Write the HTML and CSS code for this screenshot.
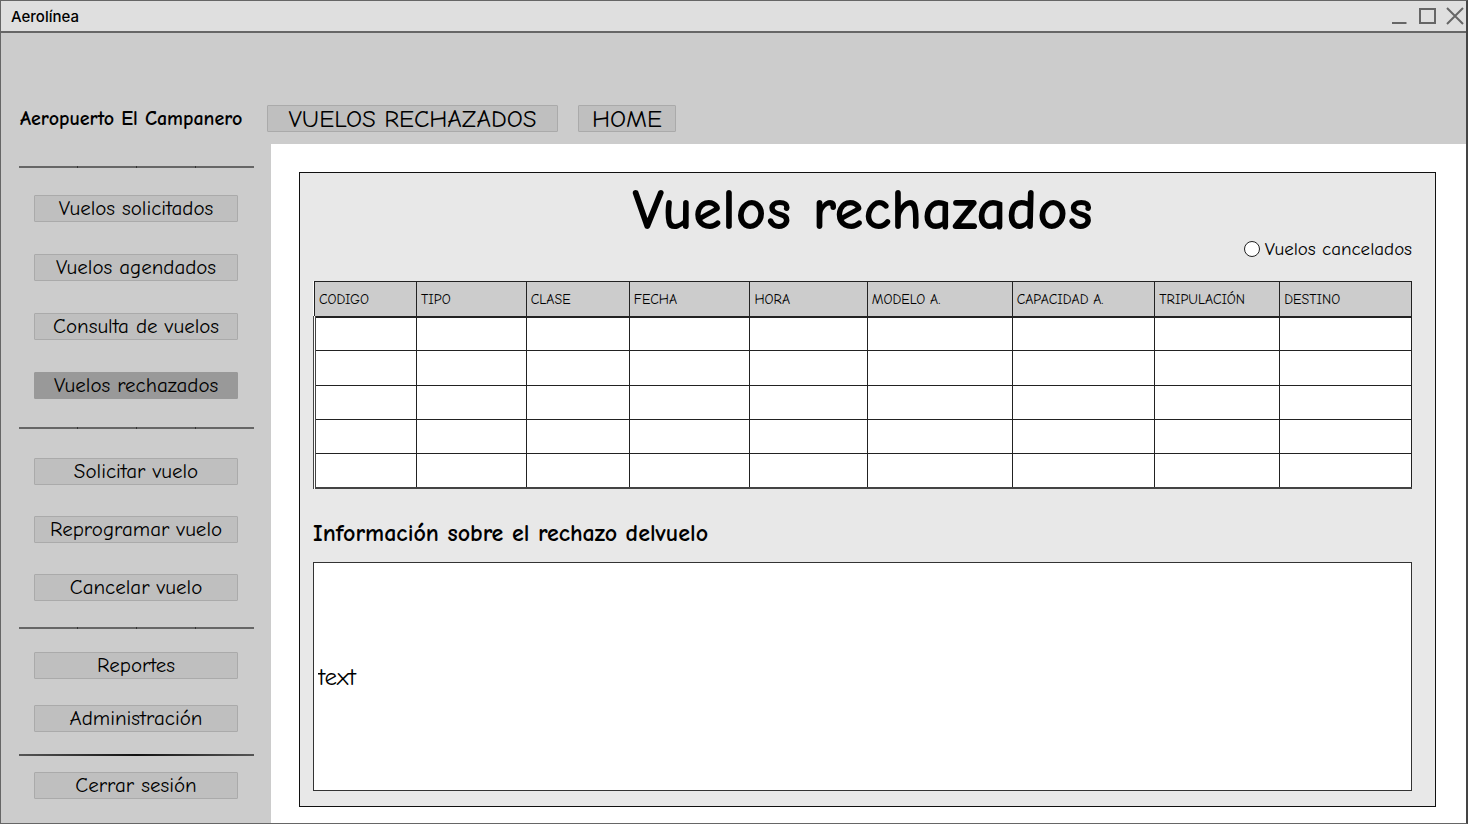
FILE: index.html
```html
<!DOCTYPE html>
<html lang="es">
<head>
<meta charset="utf-8">
<meta name="viewport" content="width=device-width, initial-scale=1">
<title>Aerolínea</title>
<link rel="stylesheet" href="styles.css">
</head>
<body>
<div class="window">
  <div class="titlebar">
    <span class="titlebar-name">Aerolínea</span>
    <div class="window-controls">
      <button type="button" class="control" aria-label="Minimizar"><svg width="18" height="18" viewBox="0 0 18 18"><path d="M2 16H16.5"/></svg></button>
      <button type="button" class="control" aria-label="Maximizar"><svg width="18" height="18" viewBox="0 0 18 18"><path d="M2 2H17V16H2Z"/></svg></button>
      <button type="button" class="control" aria-label="Cerrar"><svg width="18" height="18" viewBox="0 0 18 18"><path d="M1 1L17 17M17 1L1 17"/></svg></button>
    </div>
  </div>
  <header class="header">
    <strong class="brand">Aeropuerto El Campanero</strong>
    <button type="button" class="btn btn-header btn-current">VUELOS RECHAZADOS</button>
    <button type="button" class="btn btn-header">HOME</button>
  </header>
  <div class="body">
    <nav class="sidebar">
      <hr class="rule">
      <div class="group group-wide">
        <button type="button" class="btn">Vuelos solicitados</button>
        <button type="button" class="btn">Vuelos agendados</button>
        <button type="button" class="btn">Consulta de vuelos</button>
        <button type="button" class="btn btn-active">Vuelos rechazados</button>
      </div>
      <hr class="rule">
      <div class="group">
        <button type="button" class="btn">Solicitar vuelo</button>
        <button type="button" class="btn">Reprogramar vuelo</button>
        <button type="button" class="btn">Cancelar vuelo</button>
      </div>
      <hr class="rule">
      <div class="group group-tight">
        <button type="button" class="btn">Reportes</button>
        <button type="button" class="btn">Administración</button>
      </div>
      <hr class="rule rule-plain">
      <div class="group group-last">
        <button type="button" class="btn">Cerrar sesión</button>
      </div>
    </nav>
    <main class="content">
      <section class="panel">
        <h1 class="title">Vuelos rechazados</h1>
        <label class="option"><input type="radio" class="radio" name="filtro">Vuelos cancelados</label>
        <table class="flights">
          <colgroup><col class="c1"><col class="c2"><col class="c3"><col class="c4"><col class="c5"><col class="c6"><col class="c7"><col class="c8"><col class="c9"></colgroup>
          <thead>
            <tr><th>CODIGO</th><th>TIPO</th><th>CLASE</th><th>FECHA</th><th>HORA</th><th>MODELO A.</th><th>CAPACIDAD A.</th><th>TRIPULACIÓN</th><th>DESTINO</th></tr>
          </thead>
          <tbody>
            <tr><td></td><td></td><td></td><td></td><td></td><td></td><td></td><td></td><td></td></tr>
            <tr><td></td><td></td><td></td><td></td><td></td><td></td><td></td><td></td><td></td></tr>
            <tr><td></td><td></td><td></td><td></td><td></td><td></td><td></td><td></td><td></td></tr>
            <tr><td></td><td></td><td></td><td></td><td></td><td></td><td></td><td></td><td></td></tr>
            <tr><td></td><td></td><td></td><td></td><td></td><td></td><td></td><td></td><td></td></tr>
          </tbody>
        </table>
        <label class="info-label" for="info">Información sobre el rechazo delvuelo</label>
        <input type="text" class="info" id="info" value="text">
      </section>
    </main>
  </div>
</div>
</body>
</html>
```
FILE: styles.css
```css
* {
  box-sizing: border-box;
}

body {
  margin: 0;
  color: #000;
  font-family: "Comic Sans MS", "Comic Neue", "Noto Sans", sans-serif;
  font-size: 21px;
}

button,
input {
  margin: 0;
  color: inherit;
  font: inherit;
}

.window {
  display: flex;
  flex-direction: column;
  min-height: 100vh;
  border: 1px solid #666;
  border-right: 2px solid #444;
  background: #fff;
}

.titlebar {
  display: flex;
  align-items: center;
  justify-content: space-between;
  height: 32px;
  padding: 0 2px 0 10px;
  border-bottom: 2px solid #666;
  background: #dfdfdf;
}

.titlebar-name {
  font: 500 15px/20px Inter, "Liberation Sans", sans-serif;
  padding-top: 2px;
}

.window-controls {
  display: flex;
  gap: 10px;
}

.control {
  display: flex;
  padding: 0;
  border: 0;
  background: none;
}

.control svg {
  fill: none;
  stroke: #666;
  stroke-width: 2;
}

.header {
  display: flex;
  align-items: flex-start;
  height: 111px;
  padding: 72px 20px 0 19px;
  background: #ccc;
}

.brand {
  width: 247px;
  font-size: 20px;
  line-height: 28px;
  white-space: nowrap;
}

.btn {
  display: flex;
  align-items: center;
  justify-content: center;
  height: 27px;
  padding: 0;
  border: 1px solid #aaa;
  border-radius: 1px;
  background: #bfbfbf;
  line-height: 25px;
  white-space: nowrap;
}

.btn-header {
  width: 98px;
  margin-right: 20px;
  font-size: 25px;
}

.btn-current {
  width: 291px;
}

.btn-active {
  border-color: #999;
  background: #999;
}

.body {
  display: flex;
  flex: 1;
}

.sidebar {
  flex: 0 0 270px;
  padding: 22px 17px 24px 18px;
  background: #ccc;
}

.rule {
  height: 2px;
  margin: 0;
  border: 0;
  background: repeating-linear-gradient(90deg, #666 0 58px, #333 58px 59px);
}

.rule-plain {
  background: linear-gradient(90deg, #555, #111 50%, #555);
}

.group {
  display: flex;
  flex-direction: column;
  gap: 31px;
  padding: 29px 16px 26px 15px;
}

.group-wide {
  gap: 32px;
  padding-top: 27px;
  padding-bottom: 28px;
}

.group-tight {
  gap: 26px;
  padding-top: 23px;
  padding-bottom: 22px;
}

.group-last {
  padding-top: 16px;
  padding-bottom: 0;
}

.content {
  display: flex;
  flex: 1;
  min-width: 0;
  padding: 28px 30px 16px 28px;
}

.panel {
  display: flex;
  flex: 1;
  flex-direction: column;
  min-width: 0;
  padding: 9px 23px 15px 13px;
  border: 1px solid #111;
  background: #e8e8e8;
}

.title {
  margin: 0;
  font-size: 59px;
  line-height: 56px;
  text-align: center;
}

.option {
  display: flex;
  align-items: center;
  align-self: flex-end;
  gap: 5px;
  font-size: 19px;
  line-height: 22px;
}

.radio {
  width: 16px;
  height: 16px;
  border: 1px solid #222;
  border-radius: 50%;
  background: #fff;
  appearance: none;
}

.radio:checked {
  background: radial-gradient(#222 4px, #fff 5px);
}

.flights {
  width: 100%;
  height: 208px;
  margin-top: 21px;
  border-collapse: collapse;
  table-layout: fixed;
  background: #fff;
}

.flights th,
.flights td {
  height: 34px;
  padding: 0 4px;
  border: 1px solid #222;
}

.flights th {
  height: 35px;
  padding-top: 2px;
  border-bottom: 2px solid #222;
  background: #ccc;
  font-size: 14px;
  font-weight: 400;
  line-height: 20px;
  text-align: left;
  white-space: nowrap;
}

.flights td:first-child {
  border-left: 3px double #444;
}

.flights tr:last-child td {
  border-bottom: 2px solid #444;
}

.c1 { width: 9.3%; }
.c2 { width: 10%; }
.c3 { width: 9.4%; }
.c4 { width: 11%; }
.c5 { width: 10.7%; }
.c6 { width: 13.2%; }
.c7 { width: 13%; }
.c8 { width: 11.4%; }
.c9 { width: 12%; }

.info-label {
  margin-top: 29px;
  font-size: 24px;
  font-weight: 700;
  line-height: 30px;
}

.info {
  flex: 1;
  min-height: 120px;
  margin-top: 14px;
  padding: 0 4px;
  border: 1px solid #333;
  background: #fff;
  font-size: 25px;
}
```
